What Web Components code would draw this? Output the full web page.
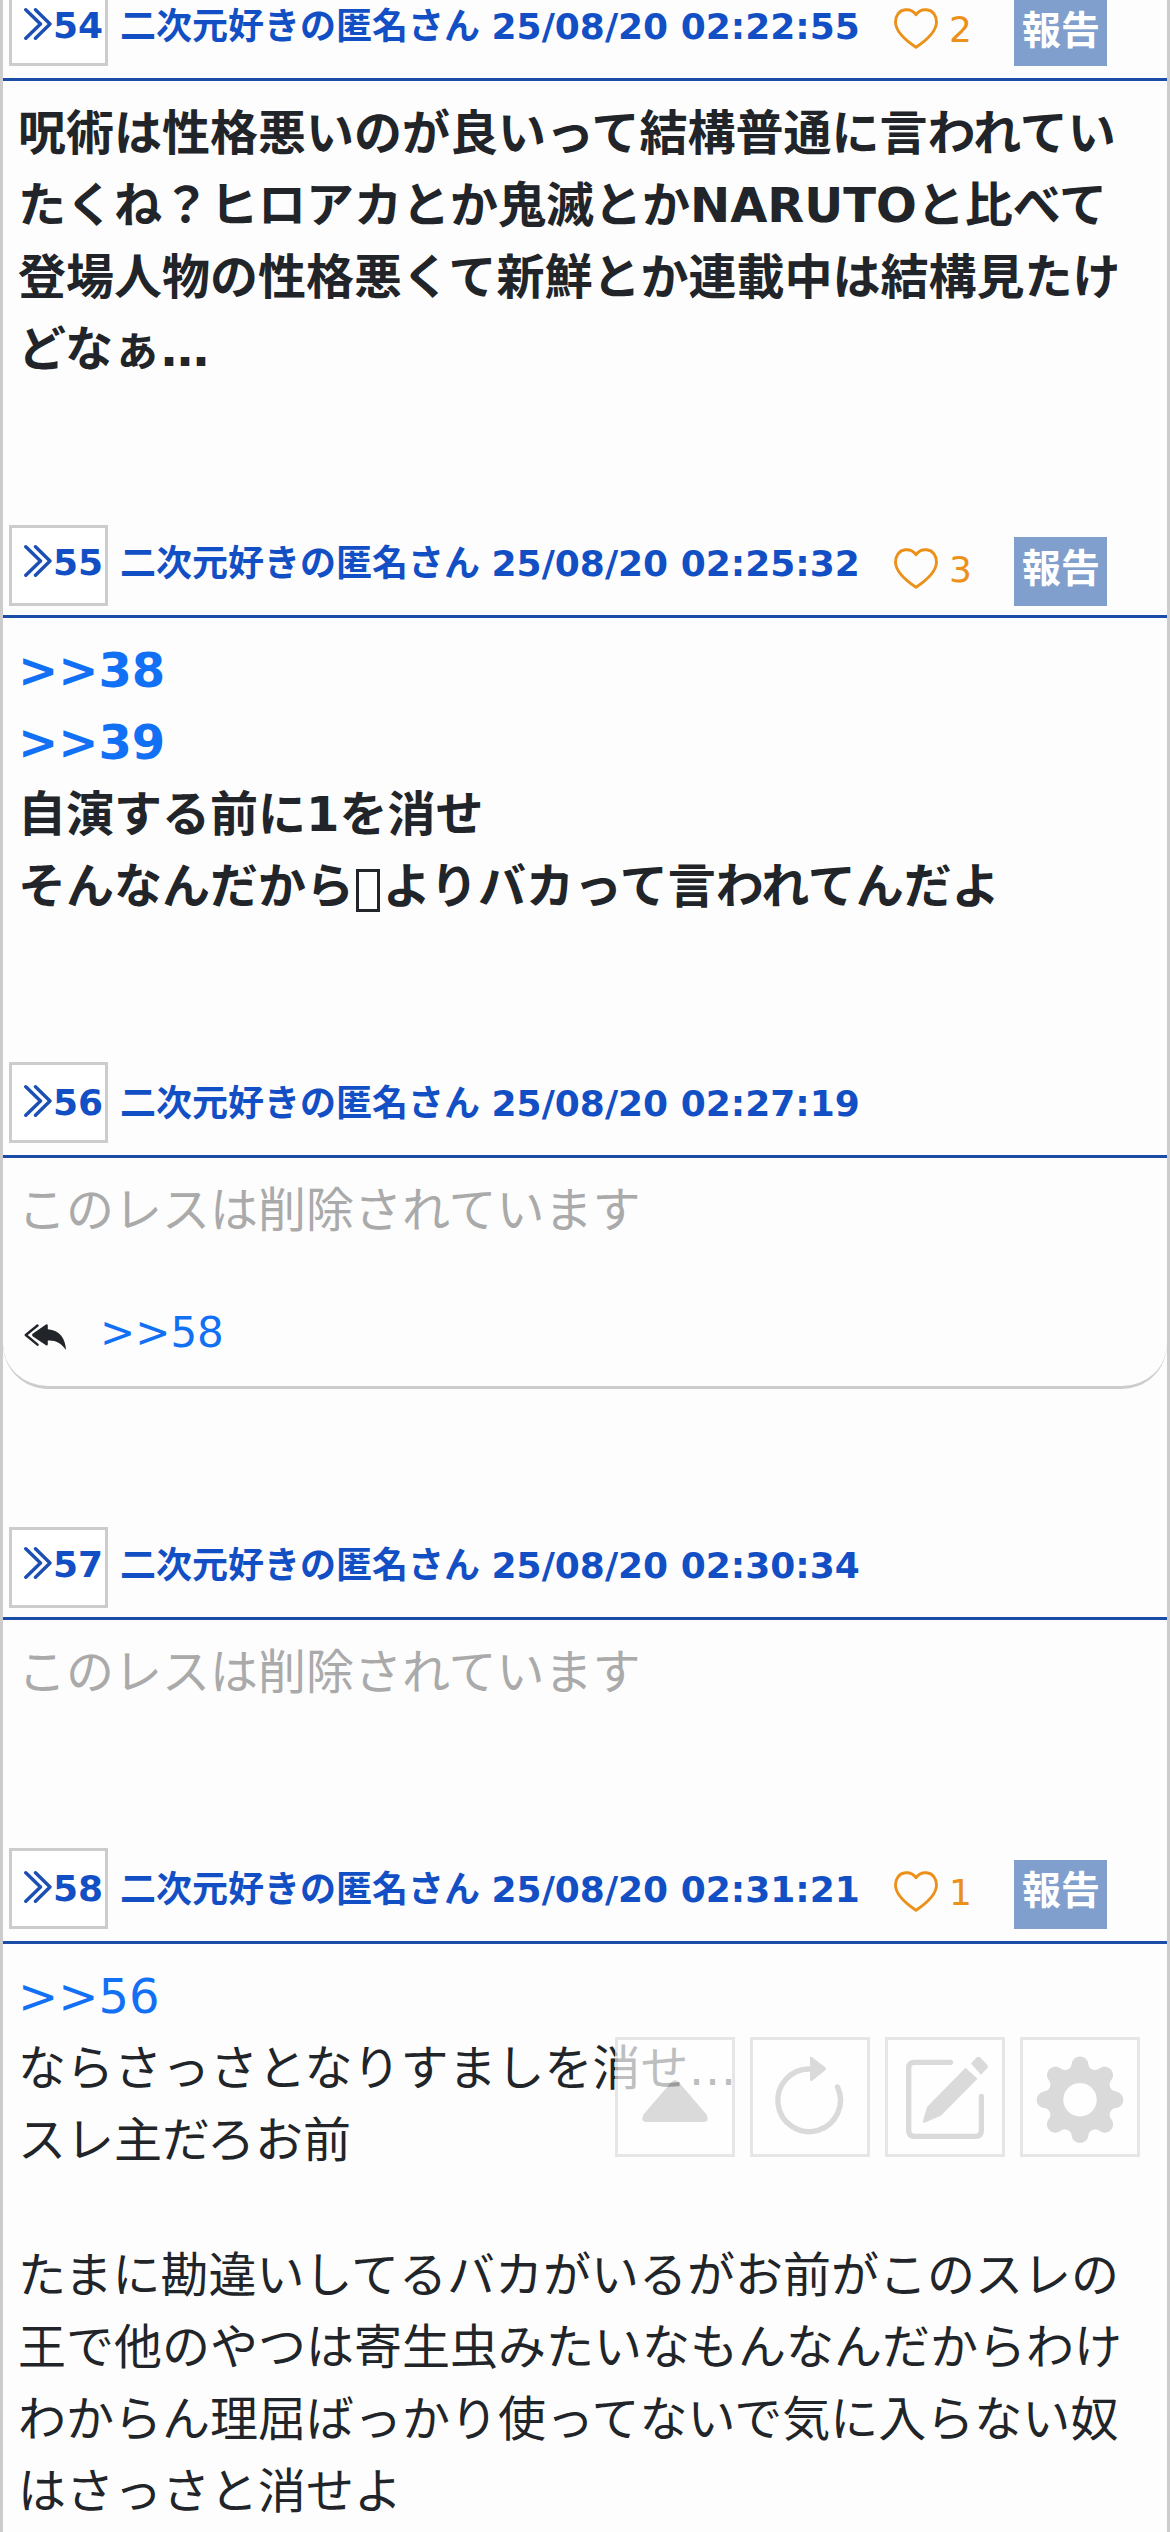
<!DOCTYPE html>
<html lang="ja">
<head>
<meta charset="utf-8">
<title>スレッド</title>
<style>
  body {
    margin: 0;
    background: #fdfdfd;
    color: #212529;
    font-family: "DejaVu Sans", "Noto Sans CJK JP", sans-serif;
    font-size: 48px;
    line-height: 72px;
  }
  b { font-weight: bold; }
</style>
</head>
<body>
<res-thread>
  <res-item no="54" date="25/08/20 02:22:55" likes="2" style="--gap:12px; --over:-15px; --label:6px"><b>呪術は性格悪いのが良いって結構普通に言われていたくね？ヒロアカとか鬼滅とかNARUTOと比べて登場人物の性格悪くて新鮮とか連載中は結構見たけどなぁ…</b></res-item>
  <res-item no="55" date="25/08/20 02:25:32" likes="3" style="--gap:9px; --label:4px"><b><res-link>&gt;&gt;38</res-link><br><res-link>&gt;&gt;39</res-link><br>自演する前に1を消せ<br>そんなんだから<glyph-box></glyph-box>よりバカって言われてんだよ</b></res-item>
  <res-item no="56" date="25/08/20 02:27:19" deleted style="--gap:12px; --end:138px"><res-replies slot="replies">&gt;&gt;58</res-replies></res-item>
  <res-item no="57" date="25/08/20 02:30:34" deleted style="--gap:9px"></res-item>
  <res-item no="58" date="25/08/20 02:31:21" likes="1" style="--gap:12px"><res-link>&gt;&gt;56</res-link><br>ならさっさとなりすましを消せ…<br>スレ主だろお前<res-space></res-space>たまに勘違いしてるバカがいるがお前がこのスレの王で他のやつは寄生虫みたいなもんなんだからわけわからん理屈ばっかり使ってないで気に入らない奴はさっさと消せよ</res-item>
</res-thread>
<float-menu>
  <float-button icon="top"></float-button>
  <float-button icon="reload"></float-button>
  <float-button icon="write"></float-button>
  <float-button icon="settings"></float-button>
</float-menu>

<script>
class ResThread extends HTMLElement {
  constructor() {
    super();
    this.attachShadow({ mode: 'open' }).innerHTML = `
      <style>
        :host {
          display: block;
          box-sizing: border-box;
          height: 2532px;
          overflow: hidden;
          border: solid #ccc;
          border-width: 0 3px;
        }
      </style>
      <slot></slot>
    `;
  }
}

class ResItem extends HTMLElement {
  constructor() {
    super();
    this.attachShadow({ mode: 'open' });
  }

  connectedCallback() {
    const no = this.getAttribute('no');
    const date = this.getAttribute('date');
    const likes = this.getAttribute('likes');
    const deleted = this.hasAttribute('deleted');

    this.shadowRoot.innerHTML = `
      <style>
        :host { display: block; }
        header {
          display: flex;
          align-items: flex-end;
          margin-top: var(--over, 0);
          border-bottom: 3px solid #1b4ca8;
          font-size: 36px;
          line-height: 42px;
        }
        res-number { margin: 0 12px var(--gap) 6px; }
        .name {
          width: 774px;
          padding-bottom: 30px;
          color: #134fc4;
          font-weight: bold;
          white-space: nowrap;
        }
        .date { margin-left: -1px; }
        res-like { margin-bottom: calc(var(--gap) + 15px); }
        res-report { margin: 0 60px var(--gap) auto; }
        .body { padding: 16px 24px 0 15px; }
        .deleted { color: #aaa; }
        .end { height: var(--end, 140px); }
      </style>
      <header>
        <res-number>${no}</res-number>
        <span class="name">二次元好きの匿名さん <span class="date">${date}</span></span>
        ${likes ? `<res-like>${likes}</res-like><res-report></res-report>` : ''}
      </header>
      <div class="body">
        ${deleted ? '<span class="deleted">このレスは削除されています</span>' : '<slot></slot>'}
      </div>
      <slot name="replies"></slot>
      <div class="end"></div>
    `;
  }
}

class ResNumber extends HTMLElement {
  constructor() {
    super();
    this.attachShadow({ mode: 'open' }).innerHTML = `
      <style>
        :host {
          display: flex;
          flex: none;
          box-sizing: border-box;
          width: 99px;
          height: 81px;
          padding: calc(5px + var(--gap)) 0 0 12px;
          border: 3px solid #ccc;
          background: #fff;
          color: #134fc4;
          font-weight: bold;
        }
        svg { flex: none; margin: 3px 1px 0 0; }
      </style>
      <svg width="28" height="32" viewBox="0 0 28 32" fill="none" stroke="#1b4fb4" stroke-width="3.4" stroke-linecap="round" stroke-linejoin="round">
        <path d="M1.8 1.8 16.5 16 1.8 30.2M11.5 1.8 26 16 11.5 30.2"/>
      </svg>
      <slot></slot>
    `;
  }
}

class ResLike extends HTMLElement {
  constructor() {
    super();
    this.attachShadow({ mode: 'open' }).innerHTML = `
      <style>
        :host {
          display: flex;
          align-items: flex-start;
          height: 44px;
          color: #eb9019;
          line-height: 42px;
        }
        svg { margin: 1px 11px 0 0; }
        span { padding-top: 2px; }
      </style>
      <svg width="44" height="41" viewBox="0 0 44 41" fill="none" stroke="currentColor" stroke-width="2.9" stroke-linejoin="round">
        <path d="M22 6.8C19.5 3 15.5 1.5 11.5 1.8 5 2.3 1.4 8 1.5 14.2 1.7 24 12 32.5 22 39.2 32 32.5 42.3 24 42.5 14.2 42.6 8 39 2.3 32.5 1.8 28.5 1.5 24.5 3 22 6.8Z"/>
      </svg>
      <span><slot></slot></span>
    `;
  }
}

class ResReport extends HTMLElement {
  constructor() {
    super();
    this.attachShadow({ mode: 'open' }).innerHTML = `
      <style>
        :host {
          display: block;
          box-sizing: border-box;
          width: 93px;
          height: 69px;
          padding: var(--label, 3px) 0 0 1px;
          background: #809fcd;
          color: #fff;
          font-size: 39px;
          font-weight: bold;
          line-height: 56px;
          text-align: center;
        }
      </style>
      報告
    `;
  }
}

class ResLink extends HTMLElement {
  constructor() {
    super();
    this.attachShadow({ mode: 'open' }).innerHTML = `
      <style>
        :host { display: inline; color: #1270f5; }
      </style>
      <slot></slot>
    `;
  }
}

// Hollow box for a character that has no glyph
class GlyphBox extends HTMLElement {
  constructor() {
    super();
    this.attachShadow({ mode: 'open' }).innerHTML = `
      <style>
        :host {
          display: inline-block;
          box-sizing: border-box;
          width: 24px;
          height: 43px;
          margin: 0 3px 0 2px;
          border: 3px solid;
          vertical-align: -9px;
        }
      </style>
    `;
  }
}

// Empty line between paragraphs, a little lower than a text line
class ResSpace extends HTMLElement {
  constructor() {
    super();
    this.attachShadow({ mode: 'open' }).innerHTML = `
      <style>
        :host { display: block; height: 63px; }
      </style>
    `;
  }
}

class ResReplies extends HTMLElement {
  constructor() {
    super();
    this.attachShadow({ mode: 'open' }).innerHTML = `
      <style>
        :host {
          display: flex;
          align-items: flex-start;
          box-sizing: border-box;
          height: 143px;
          padding: 55px 0 0 21px;
          border-bottom: 3px solid #ccc;
          border-radius: 0 0 45px 45px;
          font-size: 42px;
          line-height: 63px;
        }
        svg { margin: 23px 33px 0 0; }
      </style>
      <svg width="43" height="27" viewBox="0 0 43 27" fill="#212529">
        <path d="M13.5 1.5 1.8 11 13.5 20.7" fill="none" stroke="#212529" stroke-width="2.4" stroke-linecap="round" stroke-linejoin="round"/>
        <path d="M8.6 9.8Q7.6 11 8.6 12.2L22 21.2Q23.6 22 23.8 20.2V16.5C31 16 37 18.5 42 26 41.5 15 36 6 23.8 5.2V1.5Q23.6-.4 22 .5Z"/>
      </svg>
      <res-link><slot></slot></res-link>
    `;
  }
}

class FloatMenu extends HTMLElement {
  constructor() {
    super();
    this.attachShadow({ mode: 'open' }).innerHTML = `
      <style>
        :host {
          display: flex;
          gap: 15px;
          position: absolute;
          left: 615px;
          top: 2037px;
        }
      </style>
      <slot></slot>
    `;
  }
}

// Gear outline: eight round teeth joined by small concave arcs
function gearPath(cx, cy) {
  const point = (r, deg) => {
    const a = (deg - 90) * Math.PI / 180;
    return `${(cx + r * Math.cos(a)).toFixed(2)} ${(cy + r * Math.sin(a)).toFixed(2)}`;
  };
  let d = `M${point(37, -13)}`;
  for (let i = 0; i < 8; i++) {
    d += `A8.4 8.4 0 0 1 ${point(37, i * 45 + 13)}`;
    d += `A6.8 6.8 0 0 0 ${point(37, i * 45 + 32)}`;
  }
  return `${d}ZM${cx} ${cy - 16.7}a16.7 16.7 0 1 0 .01 0Z`;
}

const ICONS = {
  top: '<path d="M56 45.5Q60 40.5 64 45.5L91.5 77.5Q95 85 88.5 85H31.5Q25 85 28.5 77.5Z"/>',
  reload: `
    <path d="M87.5 50A31.3 31.3 0 1 1 60 32" fill="none" stroke="#ccc" stroke-width="5.4" stroke-linecap="round"/>
    <path d="M60 20.5Q61 19 62.5 20.5L75.5 30.5Q76.7 31.7 75.5 33L62.5 43.5Q61 45 60 43Z"/>`,
  write: `
    <path d="M65.5 25.3H29.5Q23.7 25.3 23.7 31.2V93.5Q23.7 99.3 29.5 99.3H90.5Q96.4 99.3 96.4 93.5V59.5" fill="none" stroke="#ccc" stroke-width="5.3" stroke-linecap="round"/>
    <path d="M80.5 30.7 92.5 41.7 56.5 78Q55.5 79 54 79.6L39.5 85.7Q37.5 86 38 84L41.5 71.5Q42 70 43 69Z"/>
    <path d="M86 26.5 91.5 20.5Q93.3 19 95.2 20.6L102 27.5Q103.7 29.5 102 31.5L96 37.7Z"/>`,
  settings: `<path fill-rule="evenodd" d="${gearPath(60, 62.7)}"/>`
};

class FloatButton extends HTMLElement {
  constructor() {
    super();
    this.attachShadow({ mode: 'open' });
  }

  connectedCallback() {
    this.shadowRoot.innerHTML = `
      <style>
        :host {
          display: block;
          box-sizing: border-box;
          width: 120px;
          height: 120px;
          border: 3px solid #ddd;
          background: #fff;
          opacity: 0.7;
        }
        svg { display: block; margin: -3px; }
      </style>
      <svg width="120" height="120" viewBox="0 0 120 120" fill="#ccc">${ICONS[this.getAttribute('icon')]}</svg>
    `;
  }
}

customElements.define('res-thread', ResThread);
customElements.define('res-item', ResItem);
customElements.define('res-number', ResNumber);
customElements.define('res-like', ResLike);
customElements.define('res-report', ResReport);
customElements.define('res-link', ResLink);
customElements.define('glyph-box', GlyphBox);
customElements.define('res-space', ResSpace);
customElements.define('res-replies', ResReplies);
customElements.define('float-menu', FloatMenu);
customElements.define('float-button', FloatButton);
</script>
</body>
</html>
